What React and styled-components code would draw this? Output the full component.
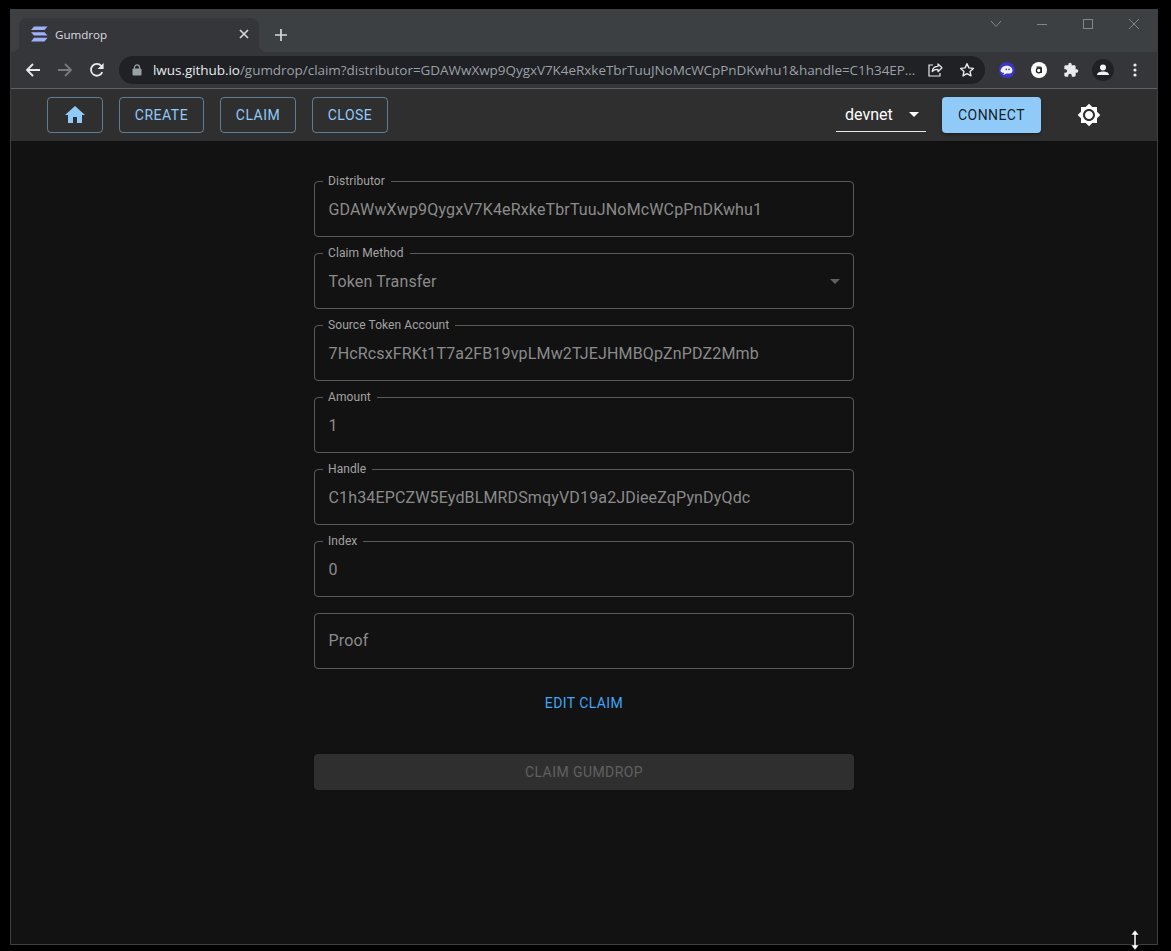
import styled, { createGlobalStyle } from "styled-components";

const GlobalStyle = createGlobalStyle`
  html, body {
    margin: 0;
    padding: 0;
    background: #000;
  }
`;

const Screen = styled.div`
  position: relative;
  width: 1171px;
  height: 951px;
  padding: 9px 13px 6px 10px;
  box-sizing: border-box;
  overflow: hidden;
  background: #000;
`;

const Window = styled.div`
  height: 100%;
  box-sizing: border-box;
  display: flex;
  flex-direction: column;
  border: 1px solid #3c3f42;
  border-top: 0;
  background: #121212;
`;

const TitleBar = styled.div`
  height: 43px;
  flex: none;
  display: flex;
  align-items: flex-end;
  padding-left: 8px;
  background: #3c4043;
`;

const Tab = styled.div`
  position: relative;
  width: 240px;
  height: 34px;
  box-sizing: border-box;
  display: flex;
  align-items: center;
  padding: 0 9px 2px 12px;
  border-radius: 8px 8px 0 0;
  background: #35363a;
  color: #dadce0;
  font: 11.6px "Open Sans", sans-serif;

  &::before,
  &::after {
    content: "";
    position: absolute;
    bottom: 0;
    width: 8px;
    height: 8px;
  }
  &::before {
    left: -8px;
    background: radial-gradient(circle at 0 0, transparent 8px, #35363a 8.5px);
  }
  &::after {
    right: -8px;
    background: radial-gradient(circle at 100% 0, transparent 8px, #35363a 8.5px);
  }
`;

const TabTitle = styled.span`
  flex: 1;
  margin-left: 7px;
`;

const NewTab = styled.div`
  width: 16px;
  height: 16px;
  margin: 0 0 9px 14px;
  display: flex;
`;

const WindowControls = styled.div`
  margin-left: auto;
  align-self: stretch;
  display: flex;
`;

const WindowControl = styled.div`
  width: 46px;
  height: 30px;
  display: flex;
  align-items: center;
  justify-content: center;
`;

const Toolbar = styled.div`
  height: 36px;
  flex: none;
  display: flex;
  align-items: center;
  padding-left: 6px;
  background: #35363a;
  border-bottom: 1px solid #5f6062;
`;

const ToolButton = styled.div`
  width: 32px;
  height: 32px;
  flex: none;
  display: flex;
  align-items: center;
  justify-content: center;
`;

const Omnibox = styled.div`
  width: 866px;
  height: 28px;
  box-sizing: border-box;
  flex: none;
  margin: 0 6px;
  padding: 0 2px 0 13px;
  display: flex;
  align-items: center;
  border-radius: 14px;
  background: #202124;
`;

const Url = styled.div`
  flex: 1;
  margin-left: 11px;
  white-space: nowrap;
  overflow: hidden;
  color: #9aa0a6;
  font: 13.5px "Open Sans", sans-serif;
  letter-spacing: -0.045px;
`;

const Host = styled.span`
  color: #e8eaed;
`;

const AppBar = styled.header`
  height: 52px;
  flex: none;
  display: flex;
  align-items: center;
  gap: 16px;
  padding-left: 36px;
  background: #2f2f2f;
  font-family: Roboto, sans-serif;
`;

const NavButton = styled.div`
  height: 36px;
  width: ${(props) => props.width}px;
  box-sizing: border-box;
  display: flex;
  align-items: center;
  justify-content: center;
  padding-bottom: 1px;
  border: 1px solid rgba(144, 202, 249, 0.5);
  border-radius: 4px;
  color: #90caf9;
  font-size: 14px;
  letter-spacing: 0.5px;
`;

const Spacer = styled.div`
  flex: 1;
`;

const NetworkSelect = styled.div`
  width: 90px;
  height: 33px;
  margin-top: 1px;
  box-sizing: border-box;
  display: flex;
  align-items: center;
  justify-content: space-between;
  padding: 0 7px 2px 9px;
  border-bottom: 1px solid #e8e8e8;
  color: #fff;
  font-size: 16px;
`;

const ConnectButton = styled.div`
  width: 99px;
  height: 36px;
  box-sizing: border-box;
  display: flex;
  align-items: center;
  justify-content: center;
  padding-bottom: 1px;
  border-radius: 4px;
  background: #90caf9;
  color: rgba(0, 0, 0, 0.87);
  font-size: 14px;
  letter-spacing: 0.42px;
  box-shadow: 0 2px 3px rgba(0, 0, 0, 0.3);
`;

const ThemeToggle = styled.div`
  width: 24px;
  height: 24px;
  margin: 0 56px 0 20px;
  color: #fff;
`;

const Main = styled.main`
  flex: 1;
  display: flex;
  justify-content: center;
  padding-top: 33px;
  font-family: Roboto, sans-serif;
`;

const Form = styled.div`
  width: 540px;
  display: flex;
  flex-direction: column;
  gap: 9px;
`;

const Field = styled.fieldset`
  margin: 0;
  min-width: 0;
  height: ${(props) => (props.$bare ? "56px" : "63px")};
  margin-top: ${(props) => (props.$bare ? "7px" : "0")};
  box-sizing: border-box;
  padding: 0 13px;
  border: 1px solid #5a5a5a;
  border-radius: 4px;
`;

const Legend = styled.legend`
  margin-left: -5px;
  padding: 0 6px 0 5px;
  height: 14px;
  color: #a3a3a3;
  font-size: 12px;
  line-height: 14px;
  letter-spacing: 0.08px;
`;

const Value = styled.div`
  display: flex;
  align-items: center;
  justify-content: space-between;
  height: ${(props) => (props.$bare ? "52px" : "42px")};
  margin-left: 0.5px;
  color: #8b8b8b;
  font-size: 16px;
  letter-spacing: 0.15px;
`;

const EditButton = styled.div`
  height: 36px;
  margin-top: 7px;
  display: flex;
  align-items: center;
  justify-content: center;
  color: #42a5f5;
  font-size: 14px;
  letter-spacing: 0.42px;
`;

const ClaimButton = styled.div`
  height: 36px;
  margin-top: 24px;
  display: flex;
  align-items: center;
  justify-content: center;
  border-radius: 4px;
  background: #2f2f2f;
  color: #606060;
  font-size: 14px;
  letter-spacing: 0.42px;
`;

const Cursor = styled.svg`
  position: absolute;
  left: 1129px;
  top: 929px;
`;

const fields = [
  { label: "Distributor", value: "GDAWwXwp9QygxV7K4eRxkeTbrTuuJNoMcWCpPnDKwhu1" },
  { label: "Claim Method", value: "Token Transfer", select: true },
  { label: "Source Token Account", value: "7HcRcsxFRKt1T7a2FB19vpLMw2TJEJHMBQpZnPDZ2Mmb" },
  { label: "Amount", value: "1" },
  { label: "Handle", value: "C1h34EPCZW5EydBLMRDSmqyVD19a2JDieeZqPynDyQdc" },
  { label: "Index", value: "0" },
];

const Caret = ({ color, width = 10 }) => (
  <svg width={width} height={width / 2} viewBox="0 0 10 5">
    <path d="M0 0l5 5 5-5z" fill={color} />
  </svg>
);

const App = () => {
  return (
    <Screen>
      <GlobalStyle />
      <Window>
        <TitleBar>
          <Tab>
            <svg width="17" height="16" viewBox="0 0 17 16">
              <path d="M3 0.5h13.5l-3 3.5H0z M0 6.2h13.5l3 3.4H3z M3 11.8h13.5l-3 3.7H0z" fill="#9fb0fb" />
            </svg>
            <TabTitle>Gumdrop</TabTitle>
            <svg width="12" height="12" viewBox="0 0 12 12">
              <path d="M2 2l8 8M10 2l-8 8" stroke="#d5d7da" strokeWidth="1.7" />
            </svg>
          </Tab>
          <NewTab>
            <svg width="16" height="16" viewBox="0 0 16 16">
              <path d="M8 2v12M2 8h12" stroke="#d5d7da" strokeWidth="1.7" />
            </svg>
          </NewTab>
          <WindowControls>
            <WindowControl>
              <svg width="12" height="8" viewBox="0 0 12 8">
                <path d="M1 1l5 5.5L11 1" fill="none" stroke="#83878a" />
              </svg>
            </WindowControl>
            <WindowControl>
              <svg width="12" height="12" viewBox="0 0 12 12">
                <path d="M1 6.5h10" stroke="#83878a" />
              </svg>
            </WindowControl>
            <WindowControl>
              <svg width="12" height="12" viewBox="0 0 12 12">
                <rect x="1.5" y="1.5" width="9" height="9" fill="none" stroke="#83878a" />
              </svg>
            </WindowControl>
            <WindowControl>
              <svg width="12" height="12" viewBox="0 0 12 12">
                <path d="M1 1l10 10M11 1L1 11" stroke="#83878a" />
              </svg>
            </WindowControl>
          </WindowControls>
        </TitleBar>

        <Toolbar>
          <ToolButton>
            <svg width="16" height="16" viewBox="0 0 16 16">
              <path d="M15 8H2M8 2L2 8l6 6" fill="none" stroke="#e8eaed" strokeWidth="1.8" />
            </svg>
          </ToolButton>
          <ToolButton>
            <svg width="16" height="16" viewBox="0 0 16 16">
              <path d="M1 8h13M8 2l6 6-6 6" fill="none" stroke="#77797c" strokeWidth="1.8" />
            </svg>
          </ToolButton>
          <ToolButton>
            <svg width="16" height="16" viewBox="0 0 16 16">
              <path d="M13.3 10.2A5.9 5.9 0 1 1 12.4 4" fill="none" stroke="#e8eaed" strokeWidth="1.8" />
              <path d="M14.6 1v6h-6z" fill="#e8eaed" />
            </svg>
          </ToolButton>
          <Omnibox>
            <svg width="10" height="12" viewBox="0 0 10 12">
              <path d="M2.5 5V3.4a2.5 2.5 0 0 1 5 0V5" fill="none" stroke="#9aa0a6" strokeWidth="1.2" />
              <rect x="0.5" y="4.6" width="9" height="7" rx="1" fill="#9aa0a6" />
            </svg>
            <Url>
              <Host>lwus.github.io</Host>/gumdrop/claim?distributor=GDAWwXwp9QygxV7K4eRxkeTbrTuuJNoMcWCpPnDKwhu1&amp;handle=C1h34EP...
            </Url>
            <ToolButton>
              <svg width="16" height="16" viewBox="0 0 16 16">
                <path d="M11 2v2.3C7.5 4.3 5.4 6.4 5.2 9.6 6.600 7.900 8.500 7.300 11 7.400v2.300l4-3.900z" fill="none" stroke="#e8eaed" strokeWidth="1.2" strokeLinejoin="round" />
                <path d="M6 3H2v11h11v-3" fill="none" stroke="#e8eaed" strokeWidth="1.2" />
              </svg>
            </ToolButton>
            <ToolButton>
              <svg width="16" height="16" viewBox="0 0 16 16">
                <path d="M8 1.700l1.900 4.200 4.500.5-3.400 3 1 4.500L8 11.600l-4 2.300 1-4.500-3.400-3 4.500-.5z" fill="none" stroke="#e8eaed" strokeWidth="1.4" strokeLinejoin="round" />
              </svg>
            </ToolButton>
          </Omnibox>
          <ToolButton>
            <svg width="16" height="16" viewBox="0 0 16 16">
              <circle cx="8" cy="8" r="8" fill="#3b36c4" />
              <path d="M1.500 9.200C1.800 6 4.300 3.800 7.600 3.800c3.400 0 5.900 2.100 5.900 4.600 0 2.300-1.800 3.100-3.900 3.100H7.300c-1 .9-2.100 1.300-3.300 1.100.8-.6 1.100-1.200 1-1.900-1.200 0-2.700-.4-3.500-1.500z" fill="#f2f2f8" />
              <circle cx="7.300" cy="7.400" r="0.800" fill="#3b36c4" />
              <circle cx="10" cy="7.400" r="0.800" fill="#3b36c4" />
            </svg>
          </ToolButton>
          <ToolButton>
            <svg width="16" height="16" viewBox="0 0 16 16">
              <circle cx="8" cy="8" r="8" fill="#fff" />
              <circle cx="7.800" cy="8.500" r="2.400" fill="none" stroke="#202124" strokeWidth="1.300" />
              <path d="M5.500 5.200h3.800c.8 0 1 .6 1 1.200v4.600" fill="none" stroke="#202124" strokeWidth="1.300" />
            </svg>
          </ToolButton>
          <ToolButton>
            <svg width="16" height="16" viewBox="0 0 24 24">
              <path d="M20.500 11H19V7c0-1.100-.9-2-2-2h-4V3.500a2.500 2.500 0 0 0-5 0V5H4c-1.100 0-2 .9-2 2v3.800h1.500a2.700 2.700 0 0 1 0 5.400H2V20c0 1.100.9 2 2 2h3.800v-1.500a2.700 2.700 0 0 1 5.400 0V22H17c1.100 0 2-.9 2-2v-4h1.500a2.500 2.500 0 0 0 0-5z" fill="#e8eaed" />
            </svg>
          </ToolButton>
          <ToolButton>
            <svg width="22" height="22" viewBox="0 0 22 22">
              <circle cx="11" cy="11" r="11" fill="#202124" />
              <circle cx="11" cy="8.500" r="3" fill="#f1f3f4" />
              <path d="M5 16c0-2.500 3-3.500 6-3.500s6 1 6 3.500z" fill="#f1f3f4" />
            </svg>
          </ToolButton>
          <ToolButton>
            <svg width="4" height="14" viewBox="0 0 4 14">
              <circle cx="2" cy="2" r="1.600" fill="#e8eaed" />
              <circle cx="2" cy="7" r="1.600" fill="#e8eaed" />
              <circle cx="2" cy="12" r="1.600" fill="#e8eaed" />
            </svg>
          </ToolButton>
        </Toolbar>

        <AppBar>
          <NavButton width={56}>
            <svg width="24" height="24" viewBox="0 0 24 24">
              <path d="M10 20v-6h4v6h5v-8h3L12 3 2 12h3v8z" fill="#90caf9" />
            </svg>
          </NavButton>
          <NavButton width={85}>CREATE</NavButton>
          <NavButton width={76}>CLAIM</NavButton>
          <NavButton width={76}>CLOSE</NavButton>
          <Spacer />
          <NetworkSelect>
            devnet
            <Caret color="#fff" />
          </NetworkSelect>
          <ConnectButton>CONNECT</ConnectButton>
          <ThemeToggle>
            <svg width="24" height="24" viewBox="0 0 24 24">
              <path
                d="M20 8.690V4h-4.690L12 .690 8.690 4H4v4.690L.690 12 4 15.310V20h4.690L12 23.310 15.310 20H20v-4.690L23.310 12 20 8.690zM12 18c-3.310 0-6-2.690-6-6s2.690-6 6-6 6 2.690 6 6-2.690 6-6 6zm0-10c-2.210 0-4 1.790-4 4s1.790 4 4 4 4-1.790 4-4-1.790-4-4-4z"
                fill="#fff"
              />
            </svg>
          </ThemeToggle>
        </AppBar>

        <Main>
          <Form>
            {fields.map((field) => (
              <Field key={field.label}>
                <Legend>{field.label}</Legend>
                <Value>
                  {field.value}
                  {field.select && <Caret color="#5f5f5f" />}
                </Value>
              </Field>
            ))}
            <Field $bare>
              <Value $bare>Proof</Value>
            </Field>
            <EditButton>EDIT CLAIM</EditButton>
            <ClaimButton>CLAIM GUMDROP</ClaimButton>
          </Form>
        </Main>
      </Window>
      <Cursor width="12" height="22" viewBox="0 0 12 22">
        <path d="M6 1L2 6h3v10H2l4 5 4-5H7V6h3z" fill="#fff" stroke="#000" strokeWidth="0.500" />
      </Cursor>
    </Screen>
  );
};

export default App;
